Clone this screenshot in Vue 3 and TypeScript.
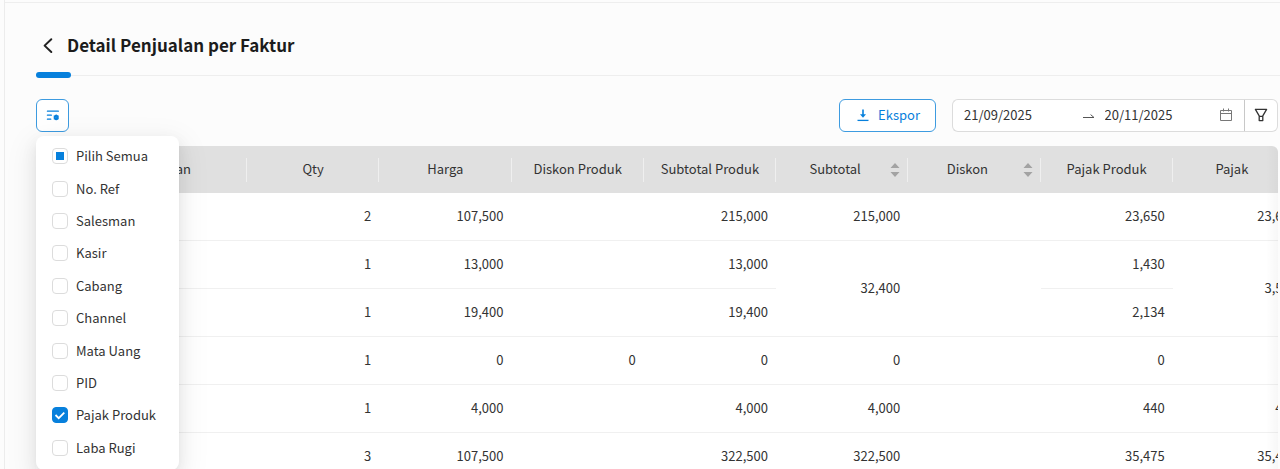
<script setup lang="ts">
import { ref } from 'vue'

interface Column {
  key: string
  title: string
  sortable?: boolean
}

interface Cell {
  key: string
  text: string
  span?: number
}

interface Option {
  id: string
  label: string
  checked: boolean
  partial?: boolean
}

const columns: Column[] = [
  { key: 'item', title: '' },
  { key: 'unit', title: 'Satuan' },
  { key: 'qty', title: 'Qty' },
  { key: 'price', title: 'Harga' },
  { key: 'itemDiscount', title: 'Diskon Produk' },
  { key: 'itemSubtotal', title: 'Subtotal Produk' },
  { key: 'subtotal', title: 'Subtotal', sortable: true },
  { key: 'discount', title: 'Diskon', sortable: true },
  { key: 'itemTax', title: 'Pajak Produk' },
  { key: 'tax', title: 'Pajak', sortable: true },
]

const keys = columns.map((c) => c.key)
const row = (texts: string[]): Cell[] => texts.map((text, i) => ({ key: keys[i], text }))

// An invoice with two products shares its subtotal, discount and tax cells.
const rows: Cell[][] = [
  row(['', '', '2', '107,500', '', '215,000', '215,000', '', '23,650', '23,650']),
  [
    ...row(['', '', '1', '13,000', '', '13,000']),
    { key: 'subtotal', text: '32,400', span: 2 },
    { key: 'discount', text: '', span: 2 },
    { key: 'itemTax', text: '1,430' },
    { key: 'tax', text: '3,564', span: 2 },
  ],
  [...row(['', '', '1', '19,400', '', '19,400']), { key: 'itemTax', text: '2,134' }],
  row(['', '', '1', '0', '0', '0', '0', '', '0', '0']),
  row(['', '', '1', '4,000', '', '4,000', '4,000', '', '440', '440']),
  row(['', '', '3', '107,500', '', '322,500', '322,500', '', '35,475', '35,475']),
]

const options = ref<Option[]>([
  { id: 'all', label: 'Pilih Semua', checked: false, partial: true },
  { id: 'ref', label: 'No. Ref', checked: false },
  { id: 'salesman', label: 'Salesman', checked: false },
  { id: 'cashier', label: 'Kasir', checked: false },
  { id: 'branch', label: 'Cabang', checked: false },
  { id: 'channel', label: 'Channel', checked: false },
  { id: 'currency', label: 'Mata Uang', checked: false },
  { id: 'pid', label: 'PID', checked: false },
  { id: 'item-tax', label: 'Pajak Produk', checked: true },
  { id: 'profit', label: 'Laba Rugi', checked: false },
])

const startDate = ref('21/09/2025')
const endDate = ref('20/11/2025')
const menuOpen = ref(true)
</script>

<template>
  <main class="page">
    <header class="heading">
      <button class="back" type="button" aria-label="Kembali">
        <svg width="12" height="18" viewBox="0 0 12 18" fill="none" stroke="currentColor" stroke-width="2" stroke-linecap="round" stroke-linejoin="round">
          <path d="M9.3 3.2 2.6 9.6l6.7 6.4" />
        </svg>
      </button>
      <h1>Detail Penjualan per Faktur</h1>
    </header>
    <div class="rule"><span class="rule-mark"></span></div>

    <section class="toolbar">
      <div class="column-picker">
        <button class="outline square" type="button" aria-label="Atur kolom" :aria-expanded="menuOpen" @click="menuOpen = !menuOpen">
          <svg width="14" height="12" viewBox="0 0 14 12" fill="none" stroke="currentColor" stroke-width="1.2" stroke-linecap="round">
            <path d="M1.4 1.2h11M1.4 5.2h4M1.4 9.2h3.4" />
            <circle cx="10.2" cy="7.4" r="1.6" stroke-width="1.9" />
            <path d="M10.2 4.8v5.2M8 6.1l4.4 2.6M8 8.7l4.4-2.6" stroke-width=".7" />
          </svg>
        </button>
        <div v-if="menuOpen" class="menu">
          <label v-for="o in options" :key="o.id" class="option">
            <input v-model="o.checked" type="checkbox" :indeterminate.prop="o.partial" />
            <span>{{ o.label }}</span>
          </label>
        </div>
      </div>

      <button class="outline export" type="button">
        <svg width="12" height="14" viewBox="0 0 12 14" fill="none" stroke="currentColor" stroke-width="1.6">
          <path d="M6 1.5v6" />
          <path d="M3 6.2h6L6 9.8z" fill="currentColor" stroke="none" />
          <path d="M.5 12.4h11" stroke-width="1.3" />
        </svg>
        <span>Ekspor</span>
      </button>

      <div class="filters">
        <div class="range">
          <input v-model="startDate" type="text" aria-label="Tanggal mulai" />
          <svg class="arrow" width="12" height="6" viewBox="0 0 12 6" fill="none" stroke="currentColor" stroke-width="1">
            <path d="M0 4.5h11L7.6 1.6" />
          </svg>
          <input v-model="endDate" type="text" aria-label="Tanggal akhir" />
          <svg class="calendar" width="14" height="14" viewBox="0 0 14 14" fill="none" stroke="currentColor" stroke-width="1">
            <path d="M1.5 2.5h11v10h-11zM1.5 5.5h11M4.5 0.5v3M9.5 0.5v3" />
          </svg>
        </div>
        <button class="filter" type="button" aria-label="Filter">
          <svg width="14" height="14" viewBox="0 0 14 14" fill="none" stroke="currentColor" stroke-width="1.3" stroke-linejoin="round">
            <path d="M1.4 1.4h11.2L8.8 7.8v4.8H5.2V7.8zM5.2 8.4h3.6" />
          </svg>
        </button>
      </div>
    </section>

    <div class="table-box">
      <div class="scroller">
        <table>
          <colgroup>
            <col v-for="c in columns" :key="c.key" :class="'col-' + c.key" />
          </colgroup>
          <thead>
            <tr>
              <th v-for="c in columns" :key="c.key" scope="col">
                <div class="head">
                  <span class="head-title">{{ c.title }}</span>
                  <button v-if="c.sortable" class="sorter" type="button" :aria-label="'Urutkan ' + c.title">
                    <svg width="10" height="14" viewBox="0 0 10 14" fill="currentColor">
                      <path d="M5 0l4.5 5H.5zM5 14L.5 9h9z" />
                    </svg>
                  </button>
                </div>
              </th>
            </tr>
          </thead>
          <tbody>
            <tr v-for="(cells, i) in rows" :key="i">
              <td v-for="cell in cells" :key="cell.key" :rowspan="cell.span">{{ cell.text }}</td>
            </tr>
          </tbody>
        </table>
      </div>
    </div>
  </main>
</template>

<style>
body {
  margin: 0;
  background: #fcfcfc;
}
</style>

<style scoped>
.page {
  --blue: #0780dc;
  box-sizing: border-box;
  height: 100vh;
  overflow: hidden;
  margin-left: 4px;
  padding: 2px 0 0 31px;
  border-left: 1px solid #ececec;
  background: linear-gradient(#eeeeee, #eeeeee) 0 2px / 100% 1px no-repeat #fcfcfc;
  color: #333;
  font-family: "Noto Sans CJK SC", "Noto Sans", sans-serif;
  font-size: 13px;
  line-height: 20px;
}

button,
input {
  box-sizing: border-box;
  margin: 0;
  padding: 0;
  font: inherit;
  color: inherit;
}

button {
  display: flex;
  align-items: center;
  justify-content: center;
  border: 0;
  background: none;
  cursor: pointer;
}

.heading {
  display: flex;
  align-items: center;
  gap: 13px;
  padding: 31px 0 14px 6px;
}

.back {
  color: #222;
}

h1 {
  margin: 0;
  font-size: 17px;
  font-weight: 700;
  line-height: 24px;
  color: #1c1c1c;
}

.rule {
  display: flex;
  align-items: center;
  height: 8px;
  background: linear-gradient(#eeeeee, #eeeeee) 0 4px / 100% 1px no-repeat;
}

.rule-mark {
  width: 35px;
  height: 6px;
  border-radius: 3px;
  background: var(--blue);
}

.toolbar {
  display: flex;
  align-items: center;
  gap: 16px;
  padding: 20px 2px 14px 0;
}

.column-picker {
  position: relative;
  margin-right: auto;
}

.outline {
  height: 33px;
  border: 1px solid #3d9be0;
  border-radius: 6px;
  background: #fff;
  color: var(--blue);
}

.square {
  width: 33px;
}

.export {
  gap: 9px;
  padding: 0 15px 2px 17px;
}

.filters {
  display: flex;
  width: 326px;
  height: 33px;
}

.range {
  display: flex;
  flex: 1;
  align-items: center;
  min-width: 0;
  padding: 0 11px 2px;
  border: 1px solid #dcdcdc;
  border-right-color: #c8c8c8;
  border-radius: 6px 0 0 6px;
  background: #fff;
}

.range input {
  flex: 1;
  min-width: 0;
  border: 0;
  outline: 0;
  background: none;
}

.arrow {
  margin: 2px 10px 0 4px;
  color: #555;
}

.calendar {
  color: #777;
}

.filter {
  width: 33px;
  padding-bottom: 2px;
  border: 1px solid #dcdcdc;
  border-left: 0;
  border-radius: 0 6px 6px 0;
  background: #fff;
}

.menu {
  position: absolute;
  z-index: 2;
  top: 37px;
  left: 0;
  display: grid;
  grid-auto-rows: 1fr;
  box-sizing: border-box;
  width: 143px;
  height: 334px;
  padding: 4px 16px 6px;
  border-radius: 8px;
  background: #fff;
  box-shadow: 0 3px 6px -4px rgba(0, 0, 0, 0.12), 0 6px 16px rgba(0, 0, 0, 0.08), 0 9px 28px 8px rgba(0, 0, 0, 0.05);
}

.option {
  display: flex;
  align-items: center;
  gap: 8px;
  white-space: nowrap;
}

.option input {
  width: 16px;
  height: 16px;
  flex: none;
  appearance: none;
  border: 1px solid #dcdcdc;
  border-radius: 4px;
  background: #fff;
}

.option input:indeterminate {
  background: linear-gradient(var(--blue), var(--blue)) center / 8px 8px no-repeat #fff;
}

.option input:checked {
  border-color: var(--blue);
  background: url("data:image/svg+xml,%3Csvg xmlns='http://www.w3.org/2000/svg' viewBox='0 0 14 14' fill='none' stroke='white' stroke-width='1.8'%3E%3Cpath d='M2.5 7l3.2 3.2 5.6-5.6'/%3E%3C/svg%3E") center / 14px 14px no-repeat var(--blue);
}

.table-box {
  position: relative;
  margin-right: 2px;
  overflow: hidden;
  border-radius: 6px 6px 0 0;
  background: #fff;
}

.table-box::after {
  content: "";
  position: absolute;
  inset: 0 0 0 auto;
  width: 12px;
  background: linear-gradient(to left, rgba(0, 0, 0, 0.03), transparent);
  pointer-events: none;
}

.scroller {
  overflow-x: auto;
}

table {
  width: 100%;
  min-width: 1269px;
  table-layout: fixed;
  border-collapse: separate;
  border-spacing: 0;
}

.col-item {
  width: 56px;
}

.col-unit {
  width: 155px;
}

th {
  height: 45px;
  padding: 0 8px 2px;
  background: linear-gradient(#efefef, #efefef) right center / 1px 24px no-repeat #e0e0e0;
  font-weight: 400;
}

th:first-child {
  background: #e0e0e0;
}

.head {
  display: flex;
  align-items: center;
  gap: 4px;
}

.head-title {
  flex: 1;
  text-align: center;
  white-space: nowrap;
}

.sorter {
  padding-top: 2px;
  color: #a3a3a3;
}

td {
  height: 46px;
  padding: 0 8px 1px;
  text-align: right;
}

tr + tr td {
  border-top: 1px solid #f0f0f0;
}
</style>
